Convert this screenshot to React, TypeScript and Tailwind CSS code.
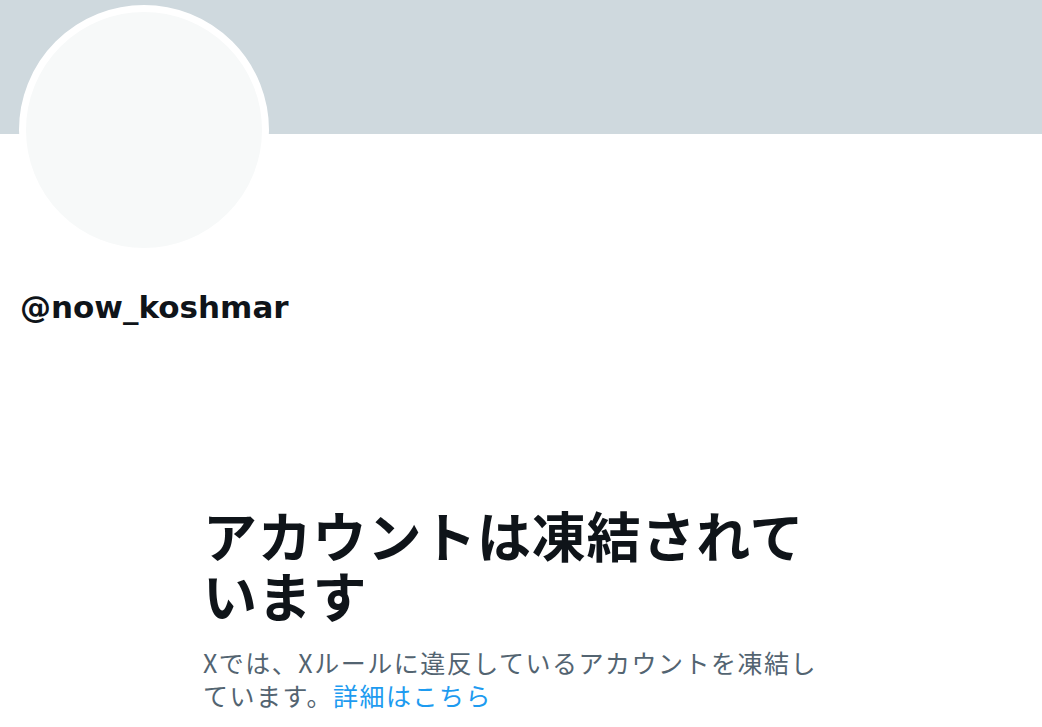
const jp = { fontFamily: '"Noto Sans CJK JP", "Noto Sans", sans-serif' }

const App = () => {
    return (
        <div className="min-h-[727px] w-full bg-white text-[#0f1419]" style={jp}>
            {/* banner */}
            <div className="h-[134px] w-full bg-[#cfd9de]" />

            {/* avatar + handle */}
            <div className="px-[19px]">
                <div className="-mt-[129px] size-[250px] rounded-full border-[7px] border-white bg-[#f7f9f9]" />
                <div className="mt-[32px] pl-px text-[31px] font-bold leading-[40px]" style={{ fontFamily: '"DejaVu Sans", "Noto Sans", sans-serif' }}>
                    @now_koshmar
                </div>
            </div>

            {/* suspended notice */}
            <div className="mx-auto mt-[178px] w-[636px]">
                <h1 className="text-[54px] font-bold leading-[60px] tracking-[0.8px]">
                    アカウントは凍結されています
                </h1>
                <p className="mt-[21px] text-[25px] leading-[33px] tracking-[1.5px] text-[#536471]">
                    Xでは、Xルールに違反しているアカウントを凍結しています。
                    <a href="#" className="text-[#1d9bf0]">詳細はこちら</a>
                </p>
            </div>
        </div>
    )
}

export default App
